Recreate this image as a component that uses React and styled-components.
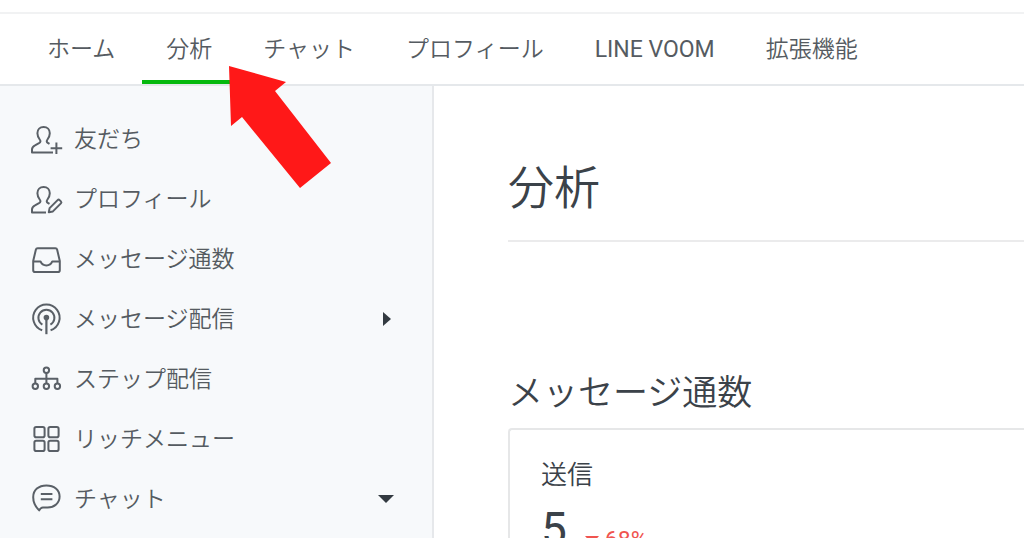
import React, { useState } from 'react';
import styled, { createGlobalStyle } from 'styled-components';

const GlobalStyle = createGlobalStyle`
  * {
    box-sizing: border-box;
  }

  body {
    margin: 0;
    overflow: hidden;
    background-color: #fff;
    color: #555b61;
    font-family: Roboto, 'Noto Sans CJK JP', sans-serif;
    font-size: 23px;
    font-weight: 350;
  }
`;

const Page = styled.div`
  position: relative;
  display: flex;
  flex-direction: column;
  min-height: 100vh;
`;

const TopStrip = styled.div`
  height: 14px;
  border-bottom: 2px solid #f1f2f3;
`;

const Header = styled.header`
  border-bottom: 2px solid #e5e8eb;
`;

const NavBar = styled.nav`
  display: flex;
  gap: 3px;
  padding-left: 23px;
`;

const NavLink = styled.a`
  padding: 19px 24px 13px;
  border-bottom: 4px solid ${props => (props.$active ? '#06b90e' : 'transparent')};
  color: inherit;
  font-weight: ${props => (props.$latin ? '400' : 'inherit')};
  line-height: 34px;
  text-decoration: none;
  white-space: nowrap;
`;

const Body = styled.div`
  display: flex;
  flex: 1;
`;

const Sidebar = styled.aside`
  flex: 0 0 434px;
  padding: 23px 38px 23px 30px;
  background-color: #f7f9fb;
  border-right: 2px solid #e6e8eb;
`;

const SideItem = styled.a`
  display: flex;
  align-items: center;
  gap: 10px;
  width: 100%;
  height: 60px;
  padding: 0;
  border: 0;
  background: none;
  color: inherit;
  font: inherit;
  text-align: left;
  text-decoration: none;
  cursor: pointer;
`;

const SideText = styled.span`
  flex: 1;
  padding-top: 2px;
  line-height: 34px;
`;

const Icon = styled.svg`
  flex: none;
  width: 34px;
  height: 32px;
  fill: none;
  stroke: #5a6067;
  stroke-width: 2;
  stroke-linejoin: round;
`;

const Caret = styled.svg`
  flex: none;
  width: 16px;
  height: 16px;
  fill: #333a41;
`;

const Main = styled.main`
  flex: 1;
  min-width: 0;
  padding: 70px 0 0 74px;
  color: #3b4249;
`;

const Title = styled.h1`
  margin: 0 0 128px;
  padding-bottom: 20px;
  border-bottom: 2px solid #ebebec;
  font-size: 46px;
  font-weight: inherit;
  line-height: 64px;
`;

const SectionTitle = styled.h2`
  margin: 0 0 10px;
  font-size: 35px;
  font-weight: inherit;
  line-height: 48px;
`;

const Card = styled.section`
  padding: 25px 31px;
  border: 2px solid #e6e7e8;
  border-right: 0;
  border-radius: 4px 0 0 4px;
`;

const CardLabel = styled.h3`
  margin: 0;
  font-size: 26px;
  font-weight: inherit;
  line-height: 40px;
`;

const Stat = styled.div`
  display: flex;
  align-items: baseline;
  gap: 18px;
  padding-top: 2px;
  font-weight: 400;
  line-height: 64px;
`;

const Value = styled.span`
  font-size: 46px;
`;

const Change = styled.span`
  display: flex;
  gap: 6px;
  color: #f0544f;
  font-size: 23px;
  line-height: 32px;
`;

const DownMark = styled.svg`
  width: 14px;
  height: 20px;
  fill: currentColor;
`;

/* red callout lying over the header and sidebar */
const Pointer = styled.svg`
  position: absolute;
  top: 66px;
  left: 228px;
  width: 104px;
  height: 123px;
  fill: #ff1818;
  pointer-events: none;
`;

const personPath =
  'H2v-3c0-2 1-3.2 3-4.2l4-2.2c1.7-1 1.8-2.1 1-3.1C8.4 15 7.4 12.8 7.4 10.2 7.4 6.5 10 4 13.6 4s6.2 2.5 6.2 6.2c0 2.6-1 4.8-2.6 6.8-.8 1-.6 2.2.6 2.9l1.7 1';

const icons = {
  friends: (
    <>
      <path d={`M23 29.5${personPath}`} />
      <path d="M26.4 19.5v11.5M20.6 25.2h11.6" />
    </>
  ),
  profile: (
    <>
      <path d={`M16 29.5${personPath}`} />
      <path d="M18.8 29.3l.8-4.2 8-8c.6-.6 1.4-.6 2 0l1.3 1.3c.6.6.6 1.4 0 2l-8 8z" />
    </>
  ),
  inbox: (
    <>
      <path d="M7.6 5.2h17.8c.9 0 1.5.5 1.7 1.3L29.8 18v9.2c0 1.1-.7 1.8-1.8 1.8H5c-1.1 0-1.8-.7-1.8-1.8V18L5.9 6.5c.2-.8.8-1.3 1.7-1.3z" />
      <path d="M3.2 18.4h7.3c1.2 3 3.2 4 5.9 4s4.7-1 5.9-4h7.5" />
    </>
  ),
  broadcast: (
    <>
      <path d="M12.2 27.2a13.2 13.2 0 1 1 8.4 0" />
      <path d="M12.4 21.6a8 8 0 1 1 8 0" />
      <circle cx="16.4" cy="14.6" r="1.8" fill="#5a6067" />
      <path d="M16.4 15v16.2" strokeWidth="2.2" />
    </>
  ),
  steps: (
    <>
      <circle cx="16.4" cy="7.2" r="2.7" />
      <circle cx="5.3" cy="23.2" r="2.7" />
      <circle cx="16.4" cy="23.2" r="2.7" />
      <circle cx="27.4" cy="23.2" r="2.7" />
      <path d="M16.4 10v10.4M5.3 20.4v-4.6h22.1v4.6" />
    </>
  ),
  grid: (
    <>
      <rect x="4.4" y="4" width="10.2" height="10.2" rx="1.8" />
      <rect x="18.4" y="4" width="10.2" height="10.2" rx="1.8" />
      <rect x="4.4" y="17.8" width="10.2" height="10.2" rx="1.8" />
      <rect x="18.4" y="17.8" width="10.2" height="10.2" rx="1.8" />
    </>
  ),
  chat: (
    <>
      <path d="M9.2 27.4C5 23.2 3.2 18.8 3.2 14.2 3.2 7 8.6 2.4 16.4 2.4c7.7 0 13.2 4.4 13.2 11.2 0 6.6-5.3 10.8-12 10.8h-4.8c-1.6 0-2.6 1-3.6 3z" />
      <path d="M10.8 11h11.6M10.8 16.2h11.6" />
    </>
  ),
};

const navItems = [
  { id: 'home', text: 'ホーム' },
  { id: 'analytics', text: '分析' },
  { id: 'chat', text: 'チャット' },
  { id: 'profile', text: 'プロフィール' },
  { id: 'voom', text: 'LINE VOOM', latin: true },
  { id: 'extensions', text: '拡張機能' },
];

const sideItems = [
  { id: 'friends', icon: 'friends', text: '友だち' },
  { id: 'profile', icon: 'profile', text: 'プロフィール' },
  { id: 'count', icon: 'inbox', text: 'メッセージ通数' },
  { id: 'broadcast', icon: 'broadcast', text: 'メッセージ配信', group: true },
  { id: 'steps', icon: 'steps', text: 'ステップ配信' },
  { id: 'richmenu', icon: 'grid', text: 'リッチメニュー' },
  { id: 'chat', icon: 'chat', text: 'チャット', group: true },
];

export default function App() {
  const [activeNav, setActiveNav] = useState('analytics');
  const [openGroups, setOpenGroups] = useState({ chat: true });

  const toggleGroup = id => setOpenGroups(prev => ({ ...prev, [id]: !prev[id] }));

  return (
    <>
      <GlobalStyle />
      <Page>
        <TopStrip />
        <Header>
          <NavBar>
            {navItems.map(item => (
              <NavLink
                key={item.id}
                href={`#${item.id}`}
                $active={activeNav === item.id}
                $latin={item.latin}
                onClick={() => setActiveNav(item.id)}
              >
                {item.text}
              </NavLink>
            ))}
          </NavBar>
        </Header>

        <Body>
          <Sidebar>
            {sideItems.map(item => (
              <SideItem
                key={item.id}
                as={item.group ? 'button' : 'a'}
                href={item.group ? undefined : `#analytics-${item.id}`}
                aria-expanded={item.group ? !!openGroups[item.id] : undefined}
                onClick={item.group ? () => toggleGroup(item.id) : undefined}
              >
                <Icon viewBox="0 0 34 32" aria-hidden="true">{icons[item.icon]}</Icon>
                <SideText>{item.text}</SideText>
                {item.group && (
                  <Caret viewBox="0 0 16 16" aria-hidden="true">
                    <path d={openGroups[item.id] ? 'M0 4h16l-8 8z' : 'M5 1v14l8-7z'} />
                  </Caret>
                )}
              </SideItem>
            ))}
          </Sidebar>

          <Main>
            <Title>分析</Title>
            <SectionTitle>メッセージ通数</SectionTitle>
            <Card>
              <CardLabel>送信</CardLabel>
              <Stat>
                <Value>5</Value>
                <Change>
                  <DownMark viewBox="0 0 14 20" aria-hidden="true">
                    <path d="M0 11h14l-7 8z" />
                  </DownMark>
                  <span>68%</span>
                </Change>
              </Stat>
            </Card>
          </Main>
        </Body>

        <Pointer viewBox="0 0 104 123" aria-hidden="true">
          <path d="M1 0l57 16-11 9 56 72-31 25L14 51 3 60z" />
        </Pointer>
      </Page>
    </>
  );
}
